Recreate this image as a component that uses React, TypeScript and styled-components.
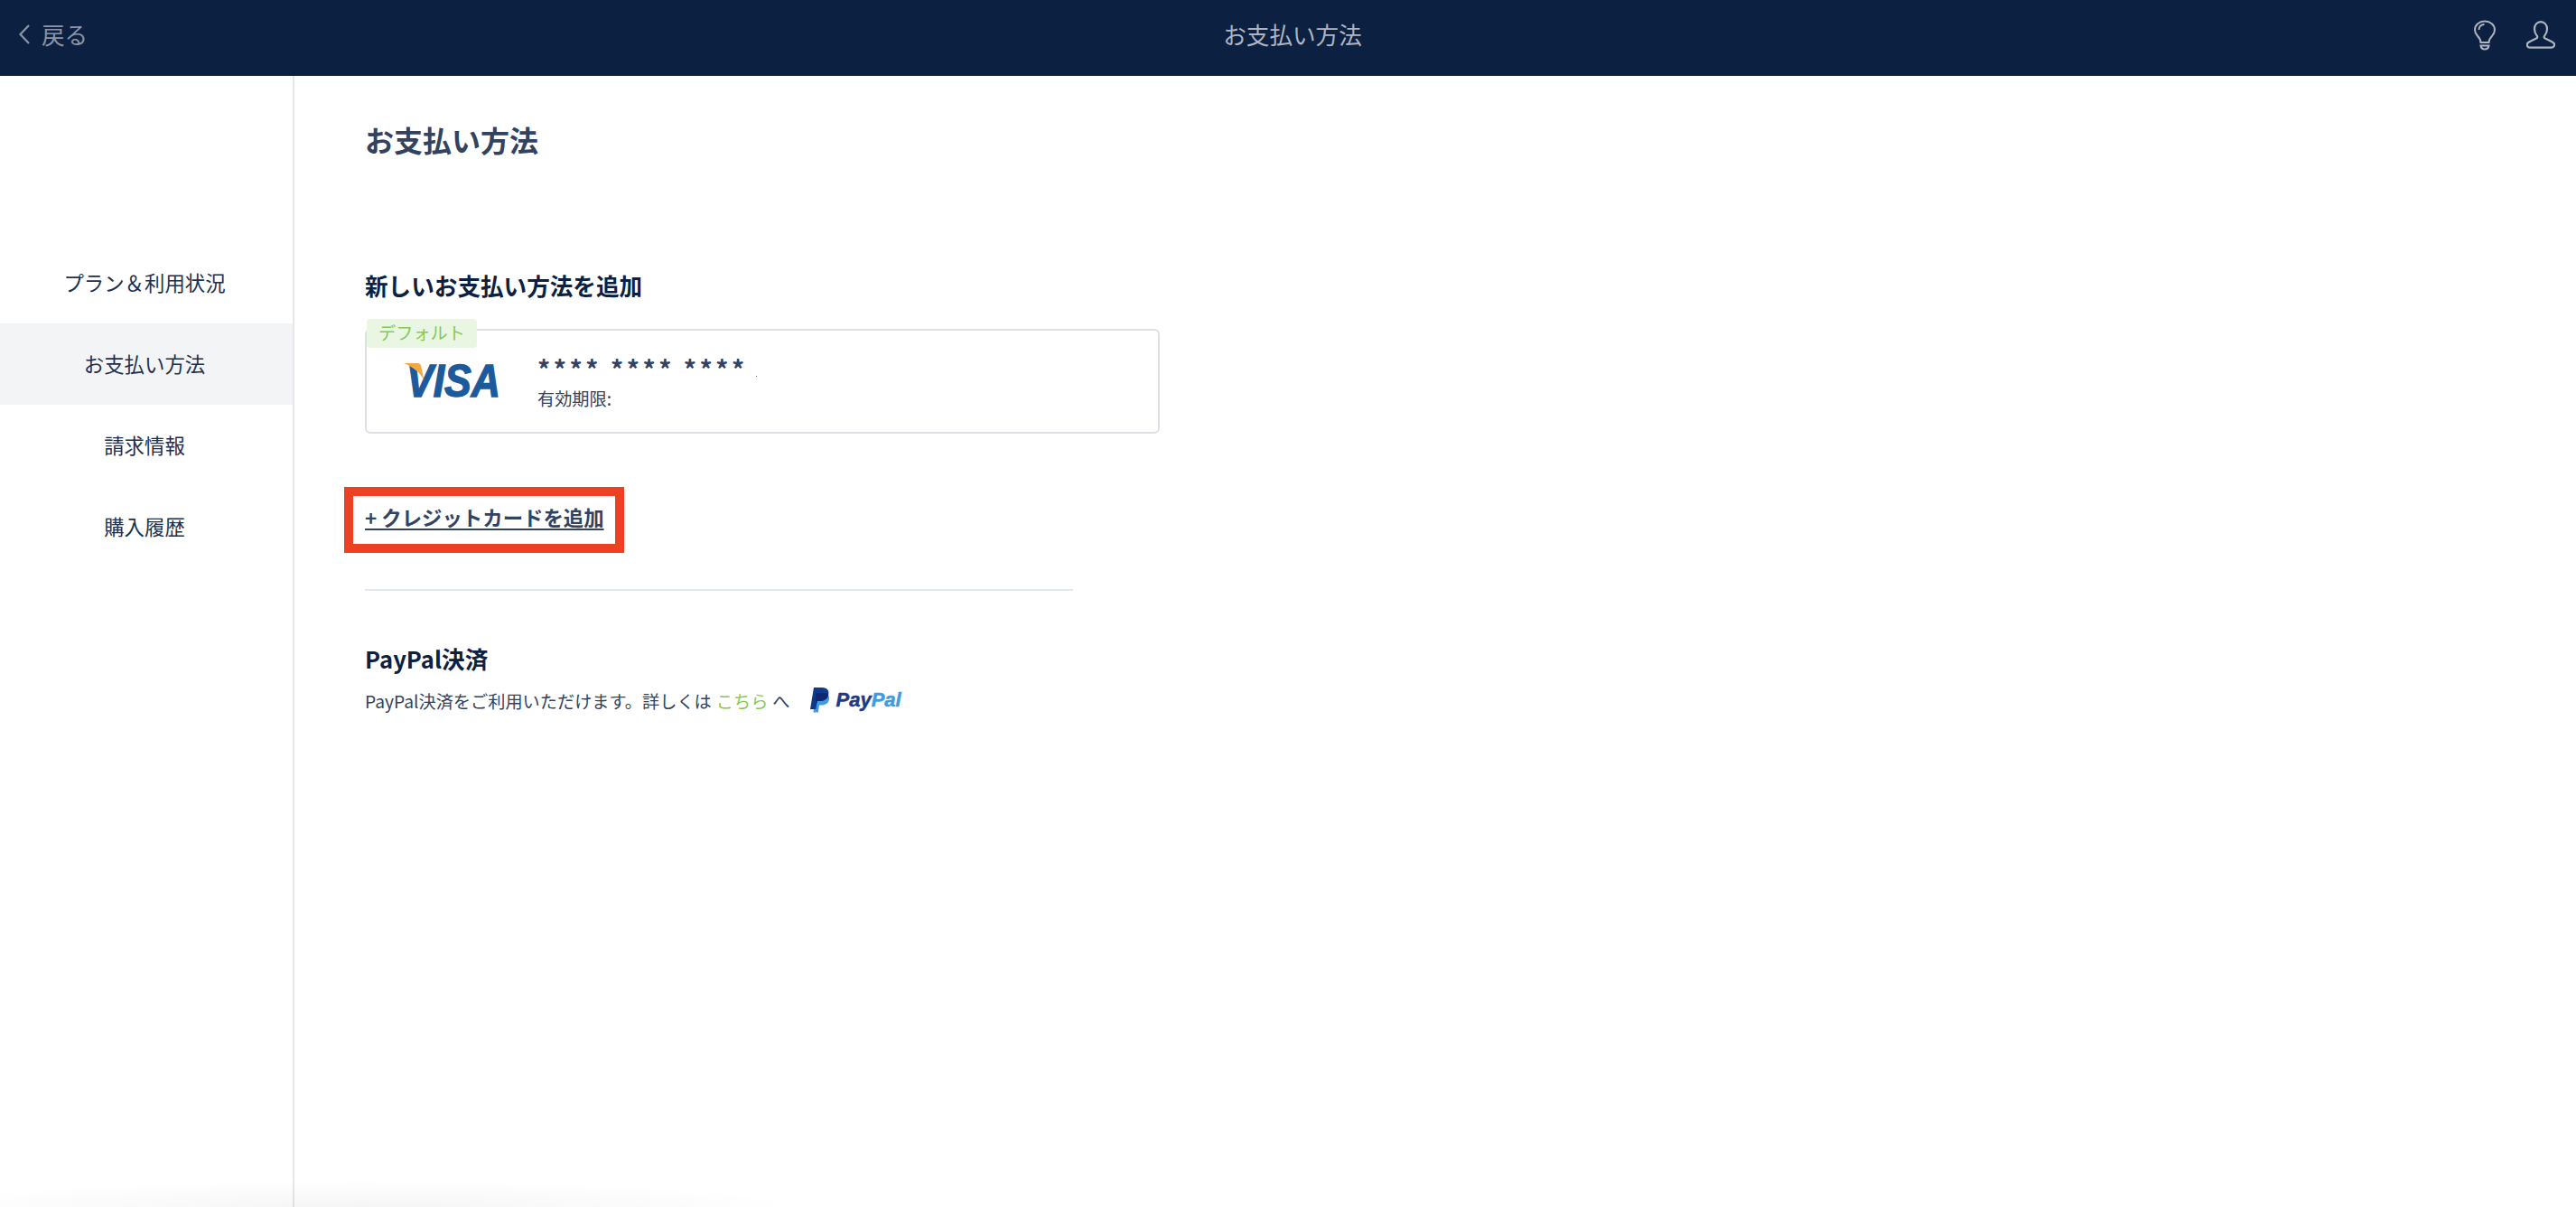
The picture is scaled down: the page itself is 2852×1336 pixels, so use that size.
import React from "react";
import styled, { createGlobalStyle } from "styled-components";

const Global = createGlobalStyle`
  html, body { margin: 0; padding: 0; background: #fff; }
  body { font-family: "Noto Sans CJK JP", "Noto Sans", sans-serif; }
  * { box-sizing: border-box; }
`;

const Page = styled.div`
  position: relative;
  width: 2852px;
  height: 1336px;
  display: flex;
  flex-direction: column;
  overflow: hidden;
  background: #fff;
`;

const TopBar = styled.header`
  height: 84px;
  flex: none;
  background: #0c2142;
  display: grid;
  grid-template-columns: 1fr auto 1fr;
  align-items: center;
  padding: 0 23px 0 20px;
`;

const BackLink = styled.a`
  display: flex;
  align-items: center;
  gap: 12px;
  font-size: 25.6px;
  line-height: 1;
  color: #8b95a6;
  margin-top: -8px;
`;

const TopTitle = styled.div`
  font-size: 25.6px;
  line-height: 1;
  color: #aeb5c1;
  margin-top: -9px;
  margin-left: 13px;
`;

const TopIcons = styled.div`
  display: flex;
  justify-content: flex-end;
  align-items: center;
  gap: 33px;
  margin-top: -6px;
`;

const Body = styled.div`
  flex: 1;
  display: flex;
  min-height: 0;
`;

const Sidebar = styled.nav`
  width: 326px;
  flex: none;
  border-right: 2px solid #e6e7ea;
  padding-top: 184px;
`;

const NavItem = styled.div<{ $active?: boolean }>`
  height: 90px;
  display: flex;
  align-items: center;
  justify-content: center;
  padding: 0 4px 2px 0;
  font-size: 22.4px;
  color: #1e3050;
  background: ${(p) => (p.$active ? "#f3f4f6" : "transparent")};
`;

const Main = styled.main`
  flex: 1;
  padding: 44px 0 0 78px;
`;

const PageTitle = styled.h1`
  margin: 0;
  font-size: 32px;
  line-height: 52px;
  font-weight: 700;
  color: #33435f;
`;

const SectionTitle = styled.h2<{ $top: number }>`
  margin: ${(p) => p.$top}px 0 0;
  font-size: 25.6px;
  line-height: 38px;
  font-weight: 700;
  color: #0c2142;
`;

const Card = styled.div`
  position: relative;
  width: 880px;
  height: 116px;
  margin-top: 29px;
  border: 2px solid #dfe0e5;
  border-radius: 6px;
  display: flex;
  align-items: center;
`;

const Badge = styled.span`
  position: absolute;
  left: 0;
  top: -13px;
  width: 122px;
  height: 32px;
  border-radius: 4px;
  background: #e9f6e2;
  color: #85c957;
  font-size: 19.2px;
  line-height: 30px;
  text-align: center;
`;

const Speck = styled.span`
  position: absolute;
  left: 431px;
  top: 50px;
  width: 1px;
  height: 1px;
  background: #5a6880;
`;

const BrandSlot = styled.div`
  width: 189px;
  flex: none;
  display: flex;
  justify-content: center;
  margin-top: -2px;
`;

const VisaSvg = styled.svg`
  overflow: visible;
`;

const CardText = styled.div`
  display: flex;
  flex-direction: column;
  gap: 3px;
  margin-top: 5px;
`;

const CardNumber = styled.div`
  font-size: 28px;
  line-height: 30px;
  letter-spacing: 3.55px;
  color: #33435f;
  white-space: pre;
  font-weight: 700;
`;

const Expiry = styled.div`
  font-size: 19.2px;
  line-height: 30px;
  color: #33435f;
`;

const AddBox = styled.div`
  width: 310px;
  height: 73px;
  margin: 59px 0 0 -23px;
  border: 10px solid #ee4023;
  display: flex;
  align-items: center;
  padding: 0 0 8px 13px;
`;

const AddLink = styled.a`
  font-size: 22.4px;
  line-height: 30px;
  font-weight: 700;
  color: #33435f;
  text-decoration: underline;
  text-underline-offset: 3px;
  white-space: nowrap;
`;

const Divider = styled.hr`
  width: 784px;
  height: 2px;
  border: 0;
  margin: 40px 0 0;
  background: #e1e7f3;
`;

const Description = styled.p`
  display: flex;
  align-items: center;
  margin: 10px 0 0;
  font-size: 19.2px;
  line-height: 36px;
  color: #33435f;
`;

const GreenLink = styled.a`
  color: #86c94f;
  margin: 0 5px;
`;

const PayPalMark = styled.span`
  display: inline-flex;
  align-items: center;
  gap: 6px;
  margin: -3px 0 0 22px;
`;

const PayPalWord = styled.span`
  font-family: "Liberation Sans", sans-serif;
  font-size: 22px;
  font-weight: 700;
  font-style: italic;
  color: #1f3a84;
  -webkit-text-stroke: 0.5px #1f3a84;
  & > b { color: #3f9bde; font-weight: 700; -webkit-text-stroke: 0.5px #3f9bde; }
`;

const BottomShade = styled.div`
  position: absolute;
  left: -100px;
  bottom: -30px;
  width: 1000px;
  height: 60px;
  background: radial-gradient(ellipse at center, rgba(0,0,0,0.04), rgba(0,0,0,0) 70%);
  pointer-events: none;
`;

const Back = () => (
  <svg width="14" height="24" viewBox="0 0 14 24" fill="none" stroke="#8b95a6" strokeWidth="2.2">
    <path d="M12 2 2.5 12 12 22" />
  </svg>
);

const Bulb = () => (
  <svg width="26" height="34" viewBox="0 0 26 34" fill="none" stroke="#aeb5c1" strokeWidth="2">
    <path d="M8.500 25c0-3-1.300-4.800-3.500-7.200C3 15.600 2 13.500 2 11 2 5.400 6.900 1.500 13 1.500S24 5.400 24 11c0 2.500-1 4.600-3 6.800-2.200 2.400-3.500 4.200-3.500 7.200z" />
    <path d="M6.500 11C6.500 7.600 9 5.200 12.500 5" />
    <path d="M8.500 28.500h9c-.4 2.700-2.300 4-4.500 4s-4.100-1.300-4.500-4z" />
  </svg>
);

const User = () => (
  <svg width="32" height="32" viewBox="0 0 32 32" fill="none" stroke="#aeb5c1" strokeWidth="2.2" strokeLinejoin="round">
    <path d="M9 9c0-4.600 3-7.800 7-7.800s7 3.200 7 7.800c0 3.600-1.400 6-2.800 7.600-.9 1-.7 2.300.7 3l7 3.300c2.800 1.300 3.800 2.900 3 4.800-.5 1.300-1.500 2-3 2H4c-1.500 0-2.500-.7-3-2-.8-1.900.2-3.500 3-4.800l7-3.300c1.400-.7 1.600-2 .7-3C10.400 15 9 12.600 9 9z" />
  </svg>
);

const VisaLogo = () => (
  <VisaSvg width="116" height="50" viewBox="0 0 116 50" role="img">
    <text x="7" y="43" fontFamily="Liberation Sans, sans-serif" fontSize="50" fontWeight="700" fontStyle="italic" fill="#1c5a9c" stroke="#1c5a9c" strokeWidth="1.4" textLength="104" lengthAdjust="spacingAndGlyphs">VISA</text>
    <path d="M4 6h15.500c2 0 3.200 1 3.700 3l3.300 16C22 16 14 10 4 6z" fill="#f2aa3e" />
  </VisaSvg>
);

const PayPalGlyph = () => (
  <svg width="23" height="28" viewBox="0 0 23 28">
    <path d="M6 6h8c4 0 7.500 2 7 6.500-.6 5-4 7-8 7h-3l-1.200 8H3.500z" fill="#3f9bde" />
    <path d="M4 0h9c5 0 8 2.500 7.300 7-.8 5.500-4.800 8-9.300 8H7.800L6.300 24H0z" fill="#0f3a8c" />
    <path d="M6 6h8.500c2.500 0 4.500.6 5.800 1.700-.8 5-4.800 7.300-9.300 7.300H7.800L6 20z" fill="#10256e" opacity=".85" />
  </svg>
);

export default function App() {
  return (
    <Page>
      <Global />
      <TopBar>
        <BackLink>
          <Back />
          戻る
        </BackLink>
        <TopTitle>お支払い方法</TopTitle>
        <TopIcons>
          <Bulb />
          <User />
        </TopIcons>
      </TopBar>
      <Body>
        <Sidebar>
          <NavItem>プラン＆利用状況</NavItem>
          <NavItem $active>お支払い方法</NavItem>
          <NavItem>請求情報</NavItem>
          <NavItem>購入履歴</NavItem>
        </Sidebar>
        <Main>
          <PageTitle>お支払い方法</PageTitle>
          <SectionTitle $top={117}>新しいお支払い方法を追加</SectionTitle>
          <Card>
            <Badge>デフォルト</Badge>
            <Speck />
            <BrandSlot>
              <VisaLogo />
            </BrandSlot>
            <CardText>
              <CardNumber>{"**** **** ****"}</CardNumber>
              <Expiry>有効期限:</Expiry>
            </CardText>
          </Card>
          <AddBox>
            <AddLink>+ クレジットカードを追加</AddLink>
          </AddBox>
          <Divider />
          <SectionTitle $top={56}>PayPal決済</SectionTitle>
          <Description>
            PayPal決済をご利用いただけます。詳しくは
            <GreenLink>こちら</GreenLink>へ
            <PayPalMark>
              <PayPalGlyph />
              <PayPalWord>Pay<b>Pal</b></PayPalWord>
            </PayPalMark>
          </Description>
        </Main>
      </Body>
      <BottomShade />
    </Page>
  );
}
